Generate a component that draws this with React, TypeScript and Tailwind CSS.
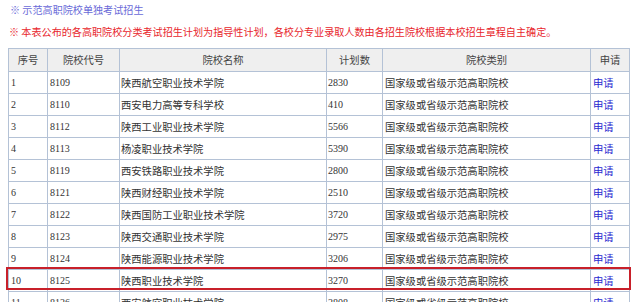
import React from "react";

const rows: [string, string, string, string][] = [
  ["1", "8109", "陕西航空职业技术学院", "2830"],
  ["2", "8110", "西安电力高等专科学校", "410"],
  ["3", "8112", "陕西工业职业技术学院", "5566"],
  ["4", "8113", "杨凌职业技术学院", "5390"],
  ["5", "8119", "西安铁路职业技术学院", "2800"],
  ["6", "8121", "陕西财经职业技术学院", "2510"],
  ["7", "8122", "陕西国防工业职业技术学院", "3720"],
  ["8", "8123", "陕西交通职业技术学院", "2975"],
  ["9", "8124", "陕西能源职业技术学院", "3206"],
  ["10", "8125", "陕西职业技术学院", "3270"],
  ["11", "8126", "西安航空职业技术学院", "2808"],
];

const cjk = "font-['Noto_Sans_CJK_SC',sans-serif]";
const num = "font-['Liberation_Serif','Noto_Sans_CJK_SC',serif]";

export default function App() {
  return (
    <div className="relative w-[640px] h-[302px] overflow-hidden bg-white">
      <div className={`${cjk} text-[10.1px] leading-none pl-[10px] pt-[5px] text-[#6a6ad8]`}>
        ※ 示范高职院校单独考试招生
      </div>
      <div className={`${cjk} text-[10.1px] leading-none pl-[9px] pt-[12px] text-[#e8262c]`}>
        ※ 本表公布的各高职院校分类考试招生计划为指导性计划，各校分专业录取人数由各招生院校根据本校招生章程自主确定。
      </div>
      <table className="ml-[8px] mt-[11px] border-collapse table-fixed w-[621px] text-[#333]">
        <colgroup>
          <col className="w-[39px]" />
          <col className="w-[72px]" />
          <col className="w-[207px]" />
          <col className="w-[56px]" />
          <col className="w-[208px]" />
          <col className="w-[39px]" />
        </colgroup>
        <thead>
          <tr className={`h-[23px] bg-[#efefef] ${cjk} text-[10.3px] text-[#444]`}>
            <th className="border border-[#b4c2d6] font-normal text-center p-0">序号</th>
            <th className="border border-[#b4c2d6] font-normal text-center p-0">院校代号</th>
            <th className="border border-[#b4c2d6] font-normal text-center p-0">院校名称</th>
            <th className="border border-[#b4c2d6] font-normal text-center p-0">计划数</th>
            <th className="border border-[#b4c2d6] font-normal text-center p-0">院校类别</th>
            <th className="border border-[#b4c2d6] font-normal text-center p-0">申请</th>
          </tr>
        </thead>
        <tbody>
          {rows.map((r) => (
            <tr key={r[0]} className="h-[22px]">
              <td className={`border border-[#b4c2d6] ${num} text-[10px] pl-[2px] py-0`}>{r[0]}</td>
              <td className={`border border-[#b4c2d6] ${num} text-[10px] pl-[2px] py-0`}>{r[1]}</td>
              <td className={`border border-[#b4c2d6] border-l-[#a0a8b4] ${cjk} text-[10.3px] pl-[1px] py-0`}>{r[2]}</td>
              <td className={`border border-[#b4c2d6] ${num} text-[10px] pl-[1px] py-0`}>{r[3]}</td>
              <td className={`border border-[#b4c2d6] ${cjk} text-[10.3px] pl-[2px] py-0`}>国家级或省级示范高职院校</td>
              <td className={`border border-[#b4c2d6] ${cjk} text-[10.3px] pl-[2px] py-0 text-[#2a2ad0]`}>申请</td>
            </tr>
          ))}
        </tbody>
      </table>
      <div className="absolute left-[6px] top-[267px] w-[625px] h-[23px] border-2 border-[#c8202a]" />
    </div>
  );
}
